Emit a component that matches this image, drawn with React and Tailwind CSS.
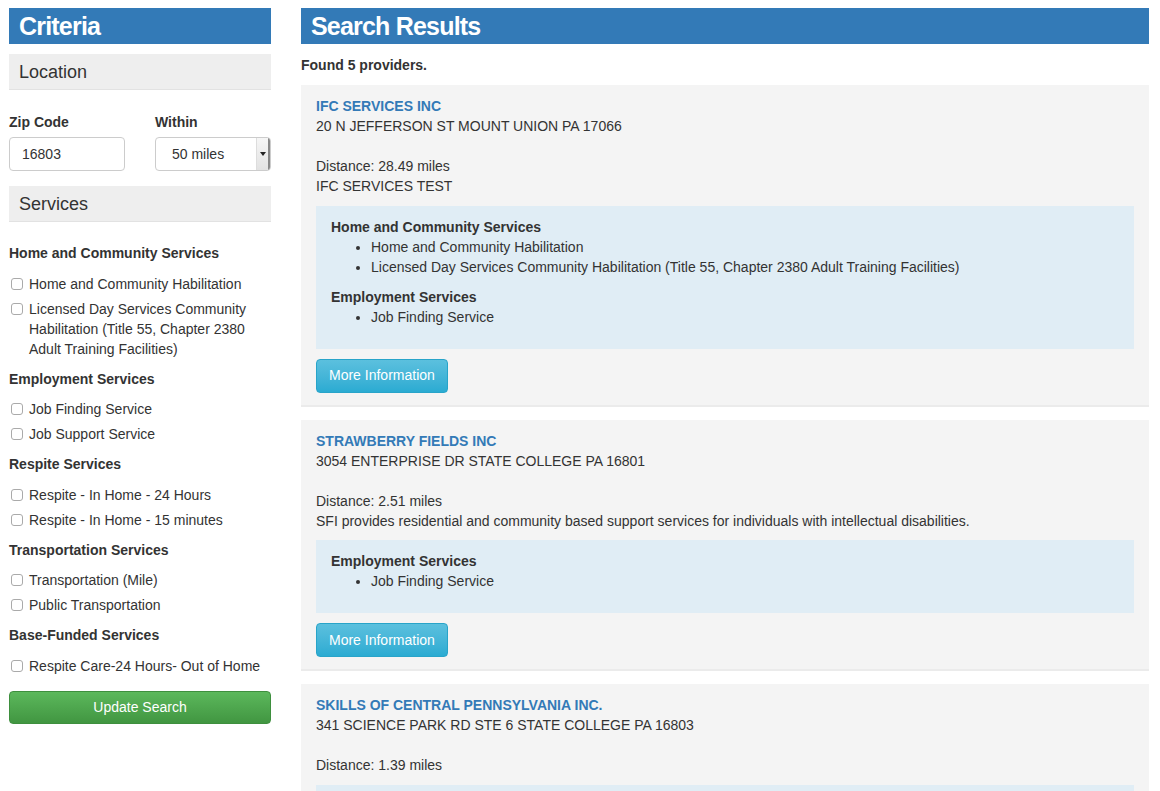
import React from "react";

const criteria = [
  {
    title: "Home and Community Services",
    items: [
      "Home and Community Habilitation",
      "Licensed Day Services Community Habilitation (Title 55, Chapter 2380 Adult Training Facilities)",
    ],
  },
  { title: "Employment Services", items: ["Job Finding Service", "Job Support Service"] },
  { title: "Respite Services", items: ["Respite - In Home - 24 Hours", "Respite - In Home - 15 minutes"] },
  { title: "Transportation Services", items: ["Transportation (Mile)", "Public Transportation"] },
  { title: "Base-Funded Services", items: ["Respite Care-24 Hours- Out of Home"] },
];

const providers = [
  {
    name: "IFC SERVICES INC",
    address: "20 N JEFFERSON ST MOUNT UNION PA 17066",
    distance: "28.49",
    description: "IFC SERVICES TEST",
    services: [
      {
        title: "Home and Community Services",
        items: [
          "Home and Community Habilitation",
          "Licensed Day Services Community Habilitation (Title 55, Chapter 2380 Adult Training Facilities)",
        ],
      },
      { title: "Employment Services", items: ["Job Finding Service"] },
    ],
  },
  {
    name: "STRAWBERRY FIELDS INC",
    address: "3054 ENTERPRISE DR STATE COLLEGE PA 16801",
    distance: "2.51",
    description:
      "SFI provides residential and community based support services for individuals with intellectual disabilities.",
    services: [{ title: "Employment Services", items: ["Job Finding Service"] }],
  },
  {
    name: "SKILLS OF CENTRAL PENNSYLVANIA INC.",
    address: "341 SCIENCE PARK RD STE 6 STATE COLLEGE PA 16803",
    distance: "1.39",
    description: "",
    services: [
      { title: "Home and Community Services", items: ["Home and Community Habilitation"] },
    ],
  },
];

function PanelTitle({ children }) {
  return (
    <div className="h-[36px] bg-[#337ab7] pl-[10px] text-[25px] font-bold leading-[36px] tracking-[-0.8px] text-white">
      {children}
    </div>
  );
}

function SubBar({ children, className = "" }) {
  return (
    <div
      className={
        "h-[36px] bg-[#eeeeee] border-b border-[#e2e2e2] pl-[10px] pt-[2px] text-[18px] leading-[33px] text-[#333] " +
        className
      }
    >
      {children}
    </div>
  );
}

function CheckItem({ label }) {
  return (
    <label className="flex items-start">
      <input
        type="checkbox"
        className="appearance-none mt-[4px] ml-[2px] mr-[6px] h-[12px] w-[12px] shrink-0 rounded-[3px] border border-[#aaa] bg-white"
      />
      <span className="leading-[20px]">{label}</span>
    </label>
  );
}

function Criteria() {
  return (
    <div className="w-[262px] shrink-0">
      <PanelTitle>Criteria</PanelTitle>
      <SubBar className="mt-[10px]">Location</SubBar>

      {/* Location fields */}
      <div className="mt-[22px] flex gap-[30px]">
        <div className="w-[116px]">
          <div className="font-bold leading-[20px]">Zip Code</div>
          <div className="mt-[5px] h-[34px] rounded-[4px] border border-[#ccc] bg-white pl-[12px] leading-[32px]">
            16803
          </div>
        </div>
        <div className="w-[116px]">
          <div className="font-bold leading-[20px]">Within</div>
          <div className="mt-[5px] flex h-[34px] overflow-hidden rounded-[4px] border border-[#ccc] bg-white">
            <div className="flex-1 pl-[16px] leading-[32px]">50 miles</div>
            <div className="flex w-[14px] items-center justify-center border-l border-[#ddd] border-r-2 border-r-[#888] bg-gradient-to-b from-[#f6f6f6] to-[#e2e2e2]">
              <svg width="6" height="4" viewBox="0 0 6 4">
                <path d="M0 0 L6 0 L3 4 Z" fill="#222" />
              </svg>
            </div>
          </div>
        </div>
      </div>

      <SubBar className="mt-[15px]">Services</SubBar>

      <div className="mt-[21px] flex flex-col gap-[10px]">
        {criteria.map((group) => (
          <div key={group.title}>
            <div className="font-bold leading-[20px]">{group.title}</div>
            <div className="mt-[10.5px] flex flex-col gap-[5px]">
              {group.items.map((item) => (
                <CheckItem key={item} label={item} />
              ))}
            </div>
          </div>
        ))}
      </div>

      <button className="mt-[15px] h-[33px] w-full rounded-[4px] border border-[#3e8f3e] bg-gradient-to-b from-[#5cb85c] to-[#419641] text-white">
        Update Search
      </button>
    </div>
  );
}

function ProviderCard({ provider }) {
  return (
    <div className="bg-[#f4f4f4] border-b-2 border-[#ebebeb] px-[15px] pt-[11px] pb-[12px]">
      <div className="font-bold leading-[20px] text-[#337ab7]">{provider.name}</div>
      <div className="leading-[20px]">{provider.address}</div>
      <div className="h-[20px]" />
      <div className="leading-[20px]">Distance: {provider.distance} miles</div>
      {provider.description && <div className="leading-[20px]">{provider.description}</div>}

      <div className="mt-[9.5px] bg-[#e0edf5] px-[15px] pt-[11px] pb-[12px]">
        {provider.services.map((s) => (
          <div key={s.title}>
            <div className="font-bold leading-[20px]">{s.title}</div>
            <ul className="mb-[10px] list-disc pl-[40px]">
              {s.items.map((i) => (
                <li key={i} className="leading-[20px]">
                  {i}
                </li>
              ))}
            </ul>
          </div>
        ))}
      </div>

      <button className="mt-[10px] h-[34px] rounded-[4px] border border-[#28a4c9] bg-gradient-to-b from-[#5bc0de] to-[#2aabd2] px-[12px] text-white">
        More Information
      </button>
    </div>
  );
}

export default function App() {
  return (
    <div
      className="flex gap-[30px] bg-white px-[9px] pt-[8px] text-[14px] text-[#333]"
      style={{ fontFamily: "'Liberation Sans', Arial, sans-serif" }}
    >
      <Criteria />
      <div className="w-[848px]">
        <PanelTitle>Search Results</PanelTitle>
        <div className="mt-[11px] font-bold leading-[20px]">Found 5 providers.</div>
        <div className="mt-[10px] flex flex-col gap-[13px]">
          {providers.map((p) => (
            <ProviderCard key={p.name} provider={p} />
          ))}
        </div>
      </div>
    </div>
  );
}
